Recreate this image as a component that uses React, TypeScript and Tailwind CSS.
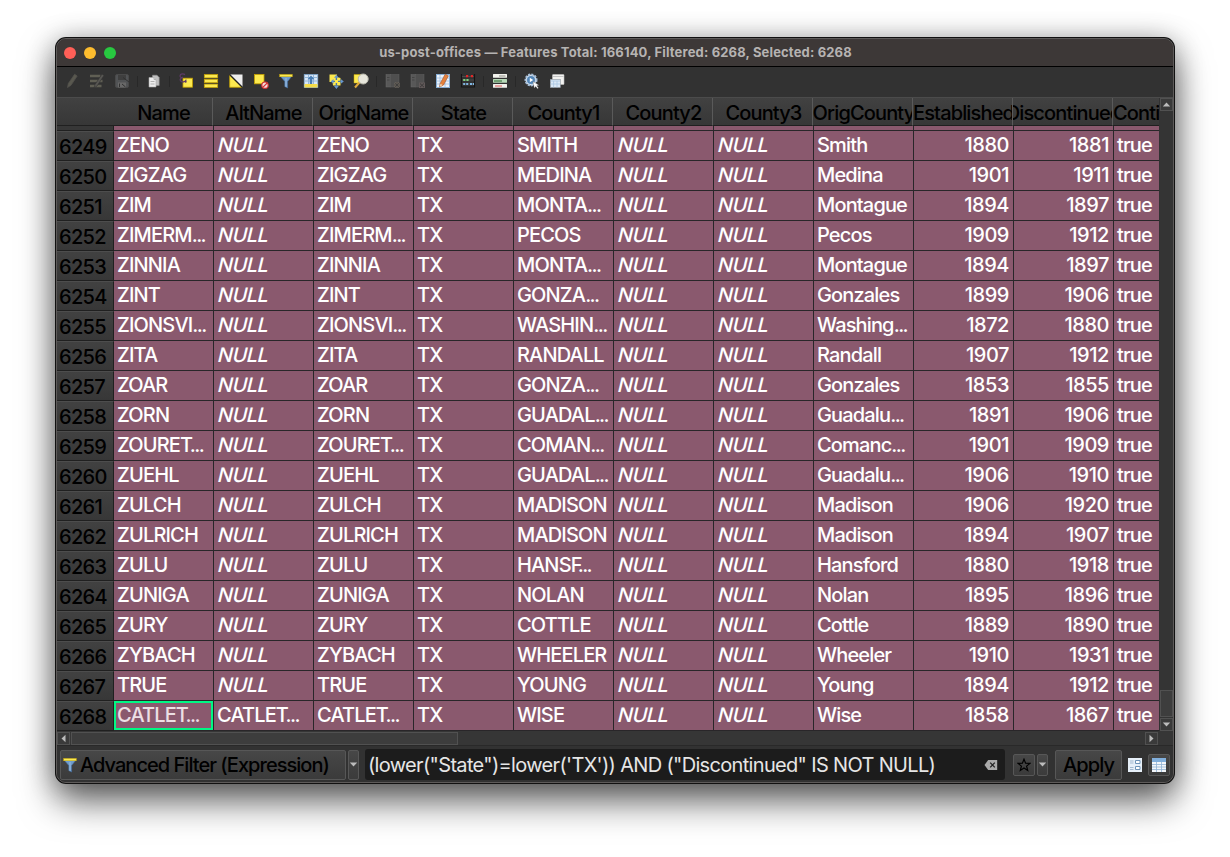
import type { ReactNode } from "react";

const COLUMNS = ["Name", "AltName", "OrigName", "State", "County1", "County2", "County3", "OrigCounty", "Established", "Discontinued"];

// id, name, altName, origName, county1, origCounty, established, discontinued
const ROWS: [number, string, string, string, string, string, number, number][] = [
  [6249, "ZENO", "", "ZENO", "SMITH", "Smith", 1880, 1881],
  [6250, "ZIGZAG", "", "ZIGZAG", "MEDINA", "Medina", 1901, 1911],
  [6251, "ZIM", "", "ZIM", "MONTA...", "Montague", 1894, 1897],
  [6252, "ZIMERM...", "", "ZIMERM...", "PECOS", "Pecos", 1909, 1912],
  [6253, "ZINNIA", "", "ZINNIA", "MONTA...", "Montague", 1894, 1897],
  [6254, "ZINT", "", "ZINT", "GONZA...", "Gonzales", 1899, 1906],
  [6255, "ZIONSVI...", "", "ZIONSVI...", "WASHIN...", "Washing...", 1872, 1880],
  [6256, "ZITA", "", "ZITA", "RANDALL", "Randall", 1907, 1912],
  [6257, "ZOAR", "", "ZOAR", "GONZA...", "Gonzales", 1853, 1855],
  [6258, "ZORN", "", "ZORN", "GUADAL...", "Guadalu...", 1891, 1906],
  [6259, "ZOURET...", "", "ZOURET...", "COMAN...", "Comanc...", 1901, 1909],
  [6260, "ZUEHL", "", "ZUEHL", "GUADAL...", "Guadalu...", 1906, 1910],
  [6261, "ZULCH", "", "ZULCH", "MADISON", "Madison", 1906, 1920],
  [6262, "ZULRICH", "", "ZULRICH", "MADISON", "Madison", 1894, 1907],
  [6263, "ZULU", "", "ZULU", "HANSF...", "Hansford", 1880, 1918],
  [6264, "ZUNIGA", "", "ZUNIGA", "NOLAN", "Nolan", 1895, 1896],
  [6265, "ZURY", "", "ZURY", "COTTLE", "Cottle", 1889, 1890],
  [6266, "ZYBACH", "", "ZYBACH", "WHEELER", "Wheeler", 1910, 1931],
  [6267, "TRUE", "", "TRUE", "YOUNG", "Young", 1894, 1912],
  [6268, "CATLET...", "CATLET...", "CATLET...", "WISE", "Wise", 1858, 1867],
];

function Icon({ children, dim = false }: { children: ReactNode; dim?: boolean }) {
  return (
    <div className={`flex w-[25px] shrink-0 items-center justify-center ${dim ? "opacity-45" : ""}`}>
      <svg width="16" height="16" viewBox="0 0 16 16">{children}</svg>
    </div>
  );
}

function Sep() {
  return (
    <div className="flex w-[7px] shrink-0 justify-center">
      <div className="h-[11px] w-px bg-[#282828]" />
    </div>
  );
}

function Funnel() {
  return (
    <>
      <path d="M2 3 L14 3 L9.6 8.5 V15 L6.8 13.6 V8.5 Z" fill="#6f9bcb" stroke="#456f9f" strokeWidth=".6" />
      <path d="M8 5 V13.8" stroke="#9dbfe2" strokeWidth=".9" />
      <rect x="1.6" y="1.4" width="12.8" height="2.4" fill="#fce94f" stroke="#c4a000" strokeWidth=".4" />
    </>
  );
}

function Book({ mark }: { mark: ReactNode }) {
  return (
    <Icon dim>
      <rect x="1" y="1.5" width="4.3" height="12.5" fill="#888" stroke="#aaa" strokeWidth=".5" />
      <rect x="5.5" y="1.5" width="8.5" height="12.5" fill="#747474" stroke="#999" strokeWidth=".5" />
      <path d="M2 4.5H4.5M2 7H4.5" stroke="#5a5a5a" />
      {mark}
    </Icon>
  );
}

function Toolbar() {
  return (
    <div className="flex h-[30px] shrink-0 items-center bg-[#323232] pb-[2px] pl-[2px]">
      <Icon dim>
        <path d="M3.5 14.5 L4.3 10.5 L10.6 1.3 L13.2 3 L7 12.3 Z" fill="#898772" stroke="#77756b" strokeWidth=".8" />
      </Icon>
      <Icon dim>
        <path d="M1 3H11.5M1 8H13.5M1 13H12.5" stroke="#99967e" strokeWidth="2.6" />
        <path d="M5 15 L6 11.5 L13 1 L15 2.5 L8 13 Z" fill="#85827a" stroke="#333" strokeWidth=".6" />
      </Icon>
      <Icon dim>
        <rect x="1.5" y="1.5" width="13" height="13" rx="1.5" fill="#787b80" stroke="#666" />
        <rect x="4" y="2" width="8" height="5" fill="#505050" />
        <rect x="4" y="9.5" width="8" height="5" fill="#aaa" />
        <path d="M5.5 10.5V14M8 11L11.5 14M9 4.5L15 9" stroke="#333" />
      </Icon>
      <Sep />
      <Icon>
        <path d="M6.5 2.2H11L13.2 4.5V12.5H6.5Z" fill="#bfbfbf" stroke="#8c8c8c" strokeWidth=".6" />
        <path d="M3 4.5H8L10 6.5V14H3Z" fill="#ededed" stroke="#aaa" strokeWidth=".6" />
        <path d="M8 4.5V6.5H10M4.5 8.5H8.5M4.5 11H8.5" stroke="#aaa" strokeWidth=".9" fill="none" />
      </Icon>
      <Sep />
      <Icon>
        <rect x="5" y="5.2" width="9.4" height="9" fill="#fce94f" stroke="#c4a000" strokeWidth=".8" />
        <path d="M7 1.6C4.5 .2 1.3 1.3 2.3 3.7C2.8 4.7 4.5 4.6 5 4.5C2.3 4.6 1.4 7 3 8.2C4.8 9.7 7.9 8.6 8.2 6.6" stroke="#5c3a66" strokeWidth="1.3" fill="none" />
        <circle cx="7.7" cy="8.7" r="1" fill="#5c3566" />
      </Icon>
      <Icon>
        {[1.5, 6.3, 11.1].map((y) => (
          <rect key={y} x="1.3" y={y} width="13.4" height="3.4" fill="#fce94f" stroke="#c4a000" strokeWidth=".7" />
        ))}
      </Icon>
      <Icon>
        <path d="M1.7 2V14.3H14.2Z" fill="#fce94f" stroke="#c4a000" strokeWidth=".8" />
        <path d="M2 1.5H14.5V14Z" fill="#eee" />
        <path d="M1.5 1.5L14.5 14.5" stroke="#222" strokeWidth="1.3" />
      </Icon>
      <Icon>
        <rect x="1.5" y="1.5" width="9.5" height="9.3" fill="#fce94f" stroke="#c4a000" strokeWidth=".8" />
        <circle cx="12" cy="12.2" r="3.2" fill="#f5dada" stroke="#d03030" strokeWidth="1.2" />
        <path d="M9.8 14.3L14.2 10" stroke="#d03030" strokeWidth="1.1" />
      </Icon>
      <Icon><Funnel /></Icon>
      <Icon>
        <rect x="1.2" y="1.5" width="13.6" height="13" fill="#d9e8f7" stroke="#7ea8d3" strokeWidth=".7" />
        <rect x="1.5" y="11" width="13" height="3.5" fill="#f4dc49" />
        <path d="M2 4.5H14M2 8H14M5.5 2V11M10.5 2V11" stroke="#8bb1d6" strokeWidth=".9" />
        <path d="M8 2.5L11.5 6.3H9.2V11H6.8V6.3H4.5Z" fill="#497db4" />
      </Icon>
      <Icon>
        <path d="M1.5 1.5H9V4L12.5 5V12.5H5L4.5 9H1.5Z" fill="#fce94f" />
        <path d="M8.4 13V4M4 8.4H13" stroke="#4a77a9" strokeWidth="1.4" />
        <path d="M8.4 16L5.8 12.8H11ZM8.4 1.8L6 4.7H10.8ZM2.6 8.4L5.5 6V10.8ZM15.8 8.4L12.8 6V10.8Z" fill="#6796ca" />
        <path d="M7 7H10V10H7Z" fill="#fce94f" />
      </Icon>
      <Icon>
        <path d="M1 1.5H8V10H1Z" fill="#fce94f" stroke="#c4a000" strokeWidth=".5" />
        <path d="M6.4 9.5L2 14.5" stroke="#e0ab3c" strokeWidth="2.1" />
        <circle cx="10.2" cy="6" r="5" fill="#e7e6db" stroke="#b9b9ae" strokeWidth="1" />
      </Icon>
      <Sep />
      <Book mark={<><circle cx="12" cy="12" r="3" fill="#b7a995" /><path d="M12 9V15M9 12H15M10 10L14 14M14 10L10 14" stroke="#444" strokeWidth=".7" /></>} />
      <Book mark={<><rect x="9" y="9.5" width="6" height="5.5" fill="#9b8989" /><path d="M10 10.5L14 14.2M14 10.5L10 14.2" stroke="#444" /></>} />
      <Icon>
        <rect x="1.5" y="1.5" width="13" height="13" fill="#edf3fa" stroke="#87aed5" strokeWidth="1" />
        <path d="M2 5H14M2 8H14M2 11H14M5 2V14M10 2V14" stroke="#9ebddf" strokeWidth=".8" />
        <path d="M4.6 14L5.2 10.4L10.2 1.2L13.4 2.8L8.5 12Z" fill="#e5813c" stroke="#9c522c" strokeWidth=".6" />
        <path d="M4.8 14L5.5 10.8L7.5 12Z" fill="#f4ddba" />
      </Icon>
      <Icon>
        <path d="M1.5 1V14.5M14.5 1V14.5M1.5 14H14.5" stroke="#151515" strokeWidth="1.2" />
        <path d="M2 3.5H14M2 7H14M2 10.8H14" stroke="#555" strokeWidth=".7" />
        <path d="M6 3.2H8.2M10.8 3.2H13" stroke="#e22626" strokeWidth="2.2" />
        <path d="M3.2 7H5.4M6.4 7H8.6" stroke="#81cf82" strokeWidth="2.2" />
        <path d="M3.2 11H5.2M6.2 11H8.2M10 11H12M12.7 11H14" stroke="#80b6e2" strokeWidth="2.2" />
      </Icon>
      <Sep />
      <Icon>
        {[1, 6, 11].map((y) => (
          <rect key={y} x="1" y={y} width="14" height="3.8" rx=".5" fill={y === 6 ? "#b8d9b8" : "#f2f2ed"} />
        ))}
        <path d="M7 3H13.5" stroke="#8b8b84" />
        <path d="M2 8H10" stroke="#5b8d5e" strokeWidth="1.6" />
        <path d="M3 13H10" stroke="#df5555" />
      </Icon>
      <Sep />
      <Icon>
        <circle cx="7" cy="7" r="5.5" fill="#d7e3f0" stroke="#a8bfd8" strokeWidth="2" strokeDasharray="2 1.2" />
        <circle cx="7" cy="7" r="4" fill="#5486b7" />
        <path d="M5.8 4.8L9.2 7L5.8 9.2Z" fill="#fff" />
        <path d="M9 8.6L15 12.3L12.8 12.7L14.5 15L13.3 15.8L11.8 13.5L10.2 15Z" fill="#fff" stroke="#555" strokeWidth=".3" />
      </Icon>
      <Icon>
        <rect x="3.5" y="1.5" width="11.5" height="10" rx=".6" fill="#f2f2f0" stroke="#bebebe" strokeWidth=".6" />
        <path d="M4 3.5H14.5" stroke="#c5c5c5" />
        <rect x="1.3" y="6.3" width="10" height="8.3" fill="#dbe9f7" stroke="#8e979f" strokeWidth=".6" />
        <path d="M1.5 8H11M1.5 11H11M4.6 8V14.3M8 8V14.3" stroke="#a9c6e2" strokeWidth=".8" />
      </Icon>
    </div>
  );
}

// Tuck the dots under letters with an overhanging arm.
function dotsClass(value: string) {
  if (value.endsWith("F...")) return "-ml-[4px] tracking-[-1.6px]";
  if (value.endsWith("T...")) return "-ml-[2.5px] tracking-[-1.6px]";
  return "tracking-[-1.6px]";
}

function Cell({ text, right = false, current = false }: {
  text: string | number; right?: boolean; current?: boolean;
}) {
  const value = String(text);
  const elided = value.endsWith("...");
  return (
    <div className={`relative flex h-[30px] w-[100px] shrink-0 items-center overflow-hidden whitespace-nowrap border-r border-b border-[#292629] bg-[#8a596e] pb-px ${right ? "justify-end pr-[4px] tracking-[-0.45px]" : "pl-[3px] tracking-[-0.85px]"} ${current ? "text-[#ecdfe4]" : "text-white"}`}>
      <span>
        {elided ? value.slice(0, -3) : value}
        {elided && <span className={dotsClass(value)}>...</span>}
      </span>
      {current && <div className="absolute inset-0 border-2 border-[#00f884]" />}
    </div>
  );
}

function Null() {
  return (
    <div className="flex h-[30px] w-[100px] shrink-0 items-center border-r border-b border-[#292629] bg-[#8a596e] pb-px pl-[4px] tracking-[-0.5px] text-white italic">
      <span className="inline-block -skew-x-4">NULL</span>
    </div>
  );
}

const HEAD = "flex h-[28px] w-[100px] shrink-0 items-center justify-center overflow-hidden whitespace-nowrap border-b border-[#202020] border-r border-r-[#5a5a5a] bg-linear-to-b from-[#414141] to-[#373737] pt-[2px] pl-[2px] text-black";

function Arrow({ d }: { d: string }) {
  return (
    <svg width="9" height="9" viewBox="0 0 9 9" className="shrink-0"><path d={d} fill="#bcbcbc" /></svg>
  );
}

const ARROW_BOX = "flex size-[13px] shrink-0 items-center justify-center border border-[#515151] bg-[#3a3a3a]";
const BUTTON = "flex shrink-0 items-center border border-[#575757] rounded-[2px] bg-linear-to-b from-[#474747] to-[#3b3b3b]";

function Table() {
  return (
    <div className="flex h-[633px] shrink-0 bg-[#323232]">
      <div className="w-[1102px] overflow-hidden">
        <div className="flex w-[1260px] text-[20px] font-medium tracking-[-0.85px]">
          <div className="h-[28px] w-[56px] shrink-0 border-b border-[#202020] bg-linear-to-b from-[#414141] to-[#373737]" />
          {COLUMNS.map((label) => (
            <div key={label} className={HEAD}>{label}</div>
          ))}
          <div className={HEAD}>Continuous</div>
        </div>
        <div className="flex h-[5px] w-[1260px]">
          <div className="w-[57px] shrink-0 border-r border-b border-[#202020] bg-[#373737]" />
          {Array.from({ length: 11 }, (_, i) => (
            <div key={i} className="w-[100px] shrink-0 border-r border-b border-[#292629] bg-[#8a596e]" />
          ))}
        </div>
        {ROWS.map(([id, name, alt, orig, county, origCounty, from, to]) => (
          <div key={id} className="flex w-[1260px] text-[20px] font-medium">
            <div className="flex h-[30px] w-[57px] shrink-0 items-center border-t border-r border-b border-[#202020] border-t-[#4d4d4d] bg-linear-to-b from-[#414141] to-[#373737] pt-px pl-[2px] tracking-[-0.65px] text-black">{id}</div>
            <Cell text={name} current={id === 6268} />
            {alt ? <Cell text={alt} /> : <Null />}
            <Cell text={orig} />
            <Cell text="TX" />
            <Cell text={county} />
            <Null />
            <Null />
            <Cell text={origCounty} />
            <Cell text={from} right />
            <Cell text={to} right />
            <Cell text="true" />
          </div>
        ))}
      </div>
      <div className="ml-px flex w-[13px] flex-col justify-between bg-[#343434]">
        <div className={ARROW_BOX}><Arrow d="M0.8 6.5H8.2L4.5 2.5Z" /></div>
        <div className="flex flex-col gap-px">
          <div className="h-[27px] border border-[#515151] bg-[#3d3d3d]" />
          <div className={ARROW_BOX}><Arrow d="M0.8 2.5H8.2L4.5 6.5Z" /></div>
        </div>
      </div>
    </div>
  );
}

export default function App() {
  return (
    <div className="h-[857px] w-[1230px] overflow-hidden bg-white pt-[38px] pl-[56px] font-['Inter',sans-serif]">
      <div className="flex h-[745px] w-[1118px] flex-col overflow-hidden rounded-[10px] border border-[#5e5b5a] bg-[#323232] shadow-[0_0_0_1px_#111,0_18px_36px_rgba(0,0,0,0.6),0_2px_28px_rgba(0,0,0,0.3)]">
        <div className="flex h-[28px] shrink-0 items-center border-b border-black bg-[#3d3837] pl-[7px]">
          <div className="flex w-[100px] gap-[8px]">
            <div className="size-[12px] rounded-full bg-[#ff5f57]" />
            <div className="size-[12px] rounded-full bg-[#febc2e]" />
            <div className="size-[12px] rounded-full bg-[#28c840]" />
          </div>
          <div className="flex-1 pr-[106px] text-center text-[13px] font-bold tracking-[0.16px] whitespace-pre text-[#b6b3b2]">us-post-offices — Features Total: 166140, Filtered: 6268, Selected: 6268</div>
        </div>
        <Toolbar />
        <div className="h-px shrink-0 bg-[#4b4b4b]" />
        <Table />
        <div className="flex h-[14px] shrink-0 items-center bg-[#363636]">
          <div className={ARROW_BOX}><Arrow d="M6.5 0.8V8.2L2.5 4.5Z" /></div>
          <div className="ml-px h-[13px] w-[387px] border border-[#515151] bg-[#3d3d3d]" />
          <div className="w-[687px]" />
          <div className={ARROW_BOX}><Arrow d="M2.5 0.8V8.2L6.5 4.5Z" /></div>
        </div>
        <div className="flex h-[37px] shrink-0 items-center border-t border-[#292929] bg-[#323232] pt-px pl-[3px] text-[20px] font-medium">
          <div className={`${BUTTON} h-[30px] w-[286px] gap-[2px] whitespace-nowrap pl-px tracking-[-0.97px] text-black`}>
            <svg width="16" height="16" viewBox="0 0 16 16" className="shrink-0"><Funnel /></svg>
            <span className="pt-px">Advanced Filter (Expression)</span>
          </div>
          <div className={`${BUTTON} ml-[2px] h-[30px] w-[11px] justify-center`}><Arrow d="M0.8 2.5H8.2L4.5 6.5Z" /></div>
          <div className="ml-[6px] flex h-[31px] w-[640px] shrink-0 items-center justify-between rounded-[3px] bg-[#1c1c1c] pr-[7px] pl-[3px] font-normal tracking-[-0.67px] whitespace-nowrap text-[#e6e6e6]">
            <span className="pt-px">(lower("State")=lower('TX')) AND ("Discontinued" IS NOT NULL)</span>
            <svg width="14" height="12" viewBox="0 0 14 12" className="shrink-0">
              <path d="M4.2 1H13.2V11H4.2L.5 6Z" fill="#aaa" />
              <path d="M6.2 3.6L10.8 8.4M10.8 3.6L6.2 8.4" stroke="#222" strokeWidth="1.3" />
            </svg>
          </div>
          <div className={`${BUTTON} ml-[8px] h-[22px] w-[22px] justify-center`}>
            <svg width="14" height="14" viewBox="0 0 14 14"><path d="M7 1.2L8.6 5.2L12.9 5.4L9.6 8.1L10.7 12.4L7 10L3.3 12.4L4.4 8.1L1.1 5.4L5.4 5.2Z" fill="none" stroke="#000" strokeWidth="1.2" /></svg>
          </div>
          <div className={`${BUTTON} ml-[2px] h-[22px] w-[11px] justify-center`}><Arrow d="M0.8 2.5H8.2L4.5 6.5Z" /></div>
          <div className={`${BUTTON} ml-[7px] h-[30px] w-[67px] justify-center pt-px tracking-[-0.9px] text-black`}>Apply</div>
          <svg width="14" height="14" viewBox="0 0 14 14" className="ml-[6px] shrink-0">
            <rect width="14" height="14" fill="#e6eff8" />
            <path d="M2 3H5.5M2 5H5.5M2 9.5H5.5M2 11.5H5.5" stroke="#a3b9cf" />
            <path d="M7.5 2.5H12V5.5H7.5ZM7.5 8.5H12V11.5H7.5Z" fill="#fff" stroke="#6d92b6" strokeWidth="1" />
          </svg>
          <div className={`${BUTTON} ml-[6px] h-[22px] w-[22px] justify-center`}>
            <svg width="14" height="14" viewBox="0 0 14 14">
              <rect width="14" height="14" fill="#f2f6fa" />
              <rect width="14" height="4" fill="#81afdc" />
              <path d="M0 6.5H14M0 9H14M0 11.5H14M4.5 4V14M9.5 4V14" stroke="#91b4d5" strokeWidth=".8" />
            </svg>
          </div>
        </div>
      </div>
    </div>
  );
}
